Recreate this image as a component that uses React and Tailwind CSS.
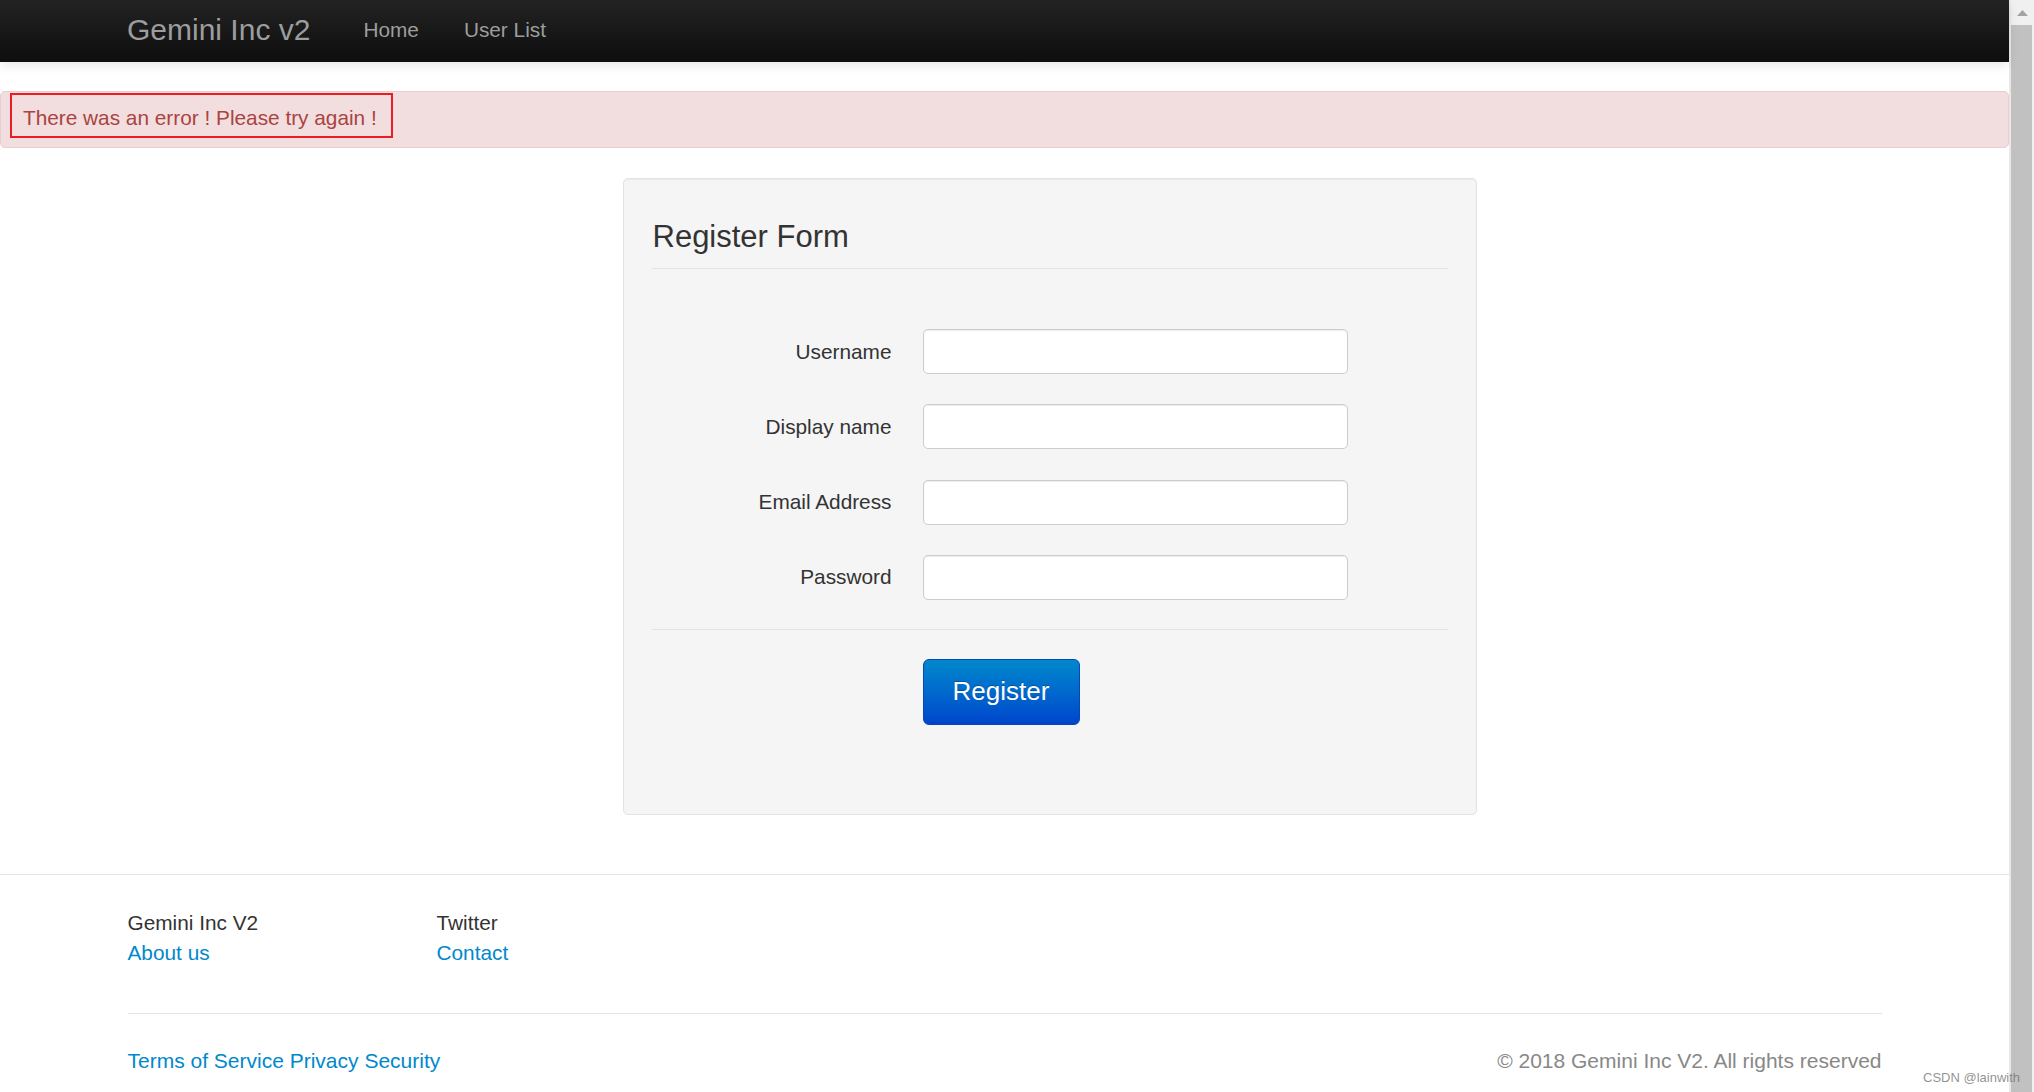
import React from "react";

function Field({ label, type = "text" }) {
  return (
    <div className="flex items-center h-[45px]">
      <label className="w-[240px] text-right pr-0 text-[20.8px] text-[#333333] leading-[30px]">{label}</label>
      <input
        type={type}
        className="ml-[31px] w-[425px] h-[45px] bg-white border border-[#cccccc] rounded-[5px] shadow-[inset_0_1px_1px_rgba(0,0,0,0.075)] outline-none px-3 text-[20.8px]"
      />
    </div>
  );
}

export default function App() {
  return (
    <div className="relative w-[2034px] h-[1092px] overflow-hidden flex bg-white font-['Liberation_Sans',Arial,sans-serif] text-[#333333]">
      {/* Page */}
      <div className="w-[2009px] flex flex-col">
        {/* Navbar */}
        <div className="relative z-10 h-[62px] flex items-center pl-[127px] pb-[2px] bg-linear-to-b from-[#232323] to-[#0e0e0e] shadow-[0_4px_10px_rgba(0,0,0,0.09)]">
          <span className="text-[30px] leading-[40px] text-[#9d9d9d]">Gemini Inc v2</span>
          <a className="ml-[53px] text-[20.8px] text-[#9d9d9d]">Home</a>
          <a className="ml-[45px] text-[20.8px] text-[#9d9d9d]">User List</a>
        </div>

        {/* Alert */}
        <div className="mt-[29px] h-[57px] border border-[#ebccd1] rounded-[5px] bg-[#f2dede] pl-[9px] pt-[1px]">
          <div className="h-[45px] w-[383px] border-2 border-[#ed1c24] flex items-center pl-[11px] pt-[5px] text-[20.8px] text-[#a94442]">
            There was an error ! Please try again !
          </div>
        </div>

        {/* Form */}
        <div className="mx-auto w-[1754px] mt-[30px]">
          <div className="ml-[495px] w-[854px] h-[637px] bg-[#f5f5f5] border border-[#e3e3e3] rounded-[5px] shadow-[inset_0_1px_1px_rgba(0,0,0,0.05)] pt-[41px] pl-[28px] pr-[28px]">
            <h3 className="ml-px text-[31px] leading-[34px] text-[#333333]">Register Form</h3>
            <div className="mt-[14px] h-px bg-[#e3e3e3]" />
            <div className="mt-[60px] flex flex-col gap-[30.3px]">
              <Field label="Username" />
              <Field label="Display name" />
              <Field label="Email Address" />
              <Field label="Password" type="password" />
            </div>
            <div className="mt-[29px] h-px bg-[#e3e3e3]" />
            <div className="mt-[29px] pl-[271px]">
              <button className="w-[157px] h-[66px] rounded-[6px] border border-[#0846b8] bg-linear-to-b from-[#0088cc] to-[#0044cc] text-white text-[26px] [text-shadow:0_-1px_0_rgba(0,0,0,0.25)]">
                Register
              </button>
            </div>
          </div>
        </div>

        {/* Footer */}
        <div className="mt-[59px] border-t border-[#e5e5e5] pt-[33px]">
          <div className="mx-auto w-[1754px]">
            <div className="flex text-[20.8px] leading-[29.7px]">
              <div className="w-[309px] flex flex-col">
                <span className="text-[#333333]">Gemini Inc V2</span>
                <a className="text-[#0088cc]">About us</a>
              </div>
              <div className="flex flex-col">
                <span className="text-[#333333]">Twitter</span>
                <a className="text-[#0088cc]">Contact</a>
              </div>
            </div>
            <div className="mt-[46px] h-px bg-[#e5e5e5]" />
            <div className="mt-[32px] flex justify-between text-[20.8px] leading-[29.7px]">
              <a className="text-[#0088cc] text-[21px]">Terms of Service Privacy Security</a>
              <span className="text-[#888888] text-[21px]">© 2018 Gemini Inc V2. All rights reserved</span>
            </div>
          </div>
        </div>
      </div>

      {/* Scrollbar */}
      <div className="w-[25px] flex flex-col bg-[#f0f0f0] border-l-2 border-[#e8e8e8]">
        <div className="h-[25px] flex items-center justify-center">
          <svg width="11" height="6" viewBox="0 0 11 6">
            <polygon points="0,6 5.5,0 11,6" fill="#a3a3a3" />
          </svg>
        </div>
        <div className="flex-1 mr-[2px] bg-[#c1c1c1]" />
      </div>

      {/* Watermark */}
      <div className="absolute right-[14px] bottom-[6px] text-[13px] text-[rgba(110,110,110,0.75)] leading-[16px]">
        CSDN @lainwith
      </div>
    </div>
  );
}
